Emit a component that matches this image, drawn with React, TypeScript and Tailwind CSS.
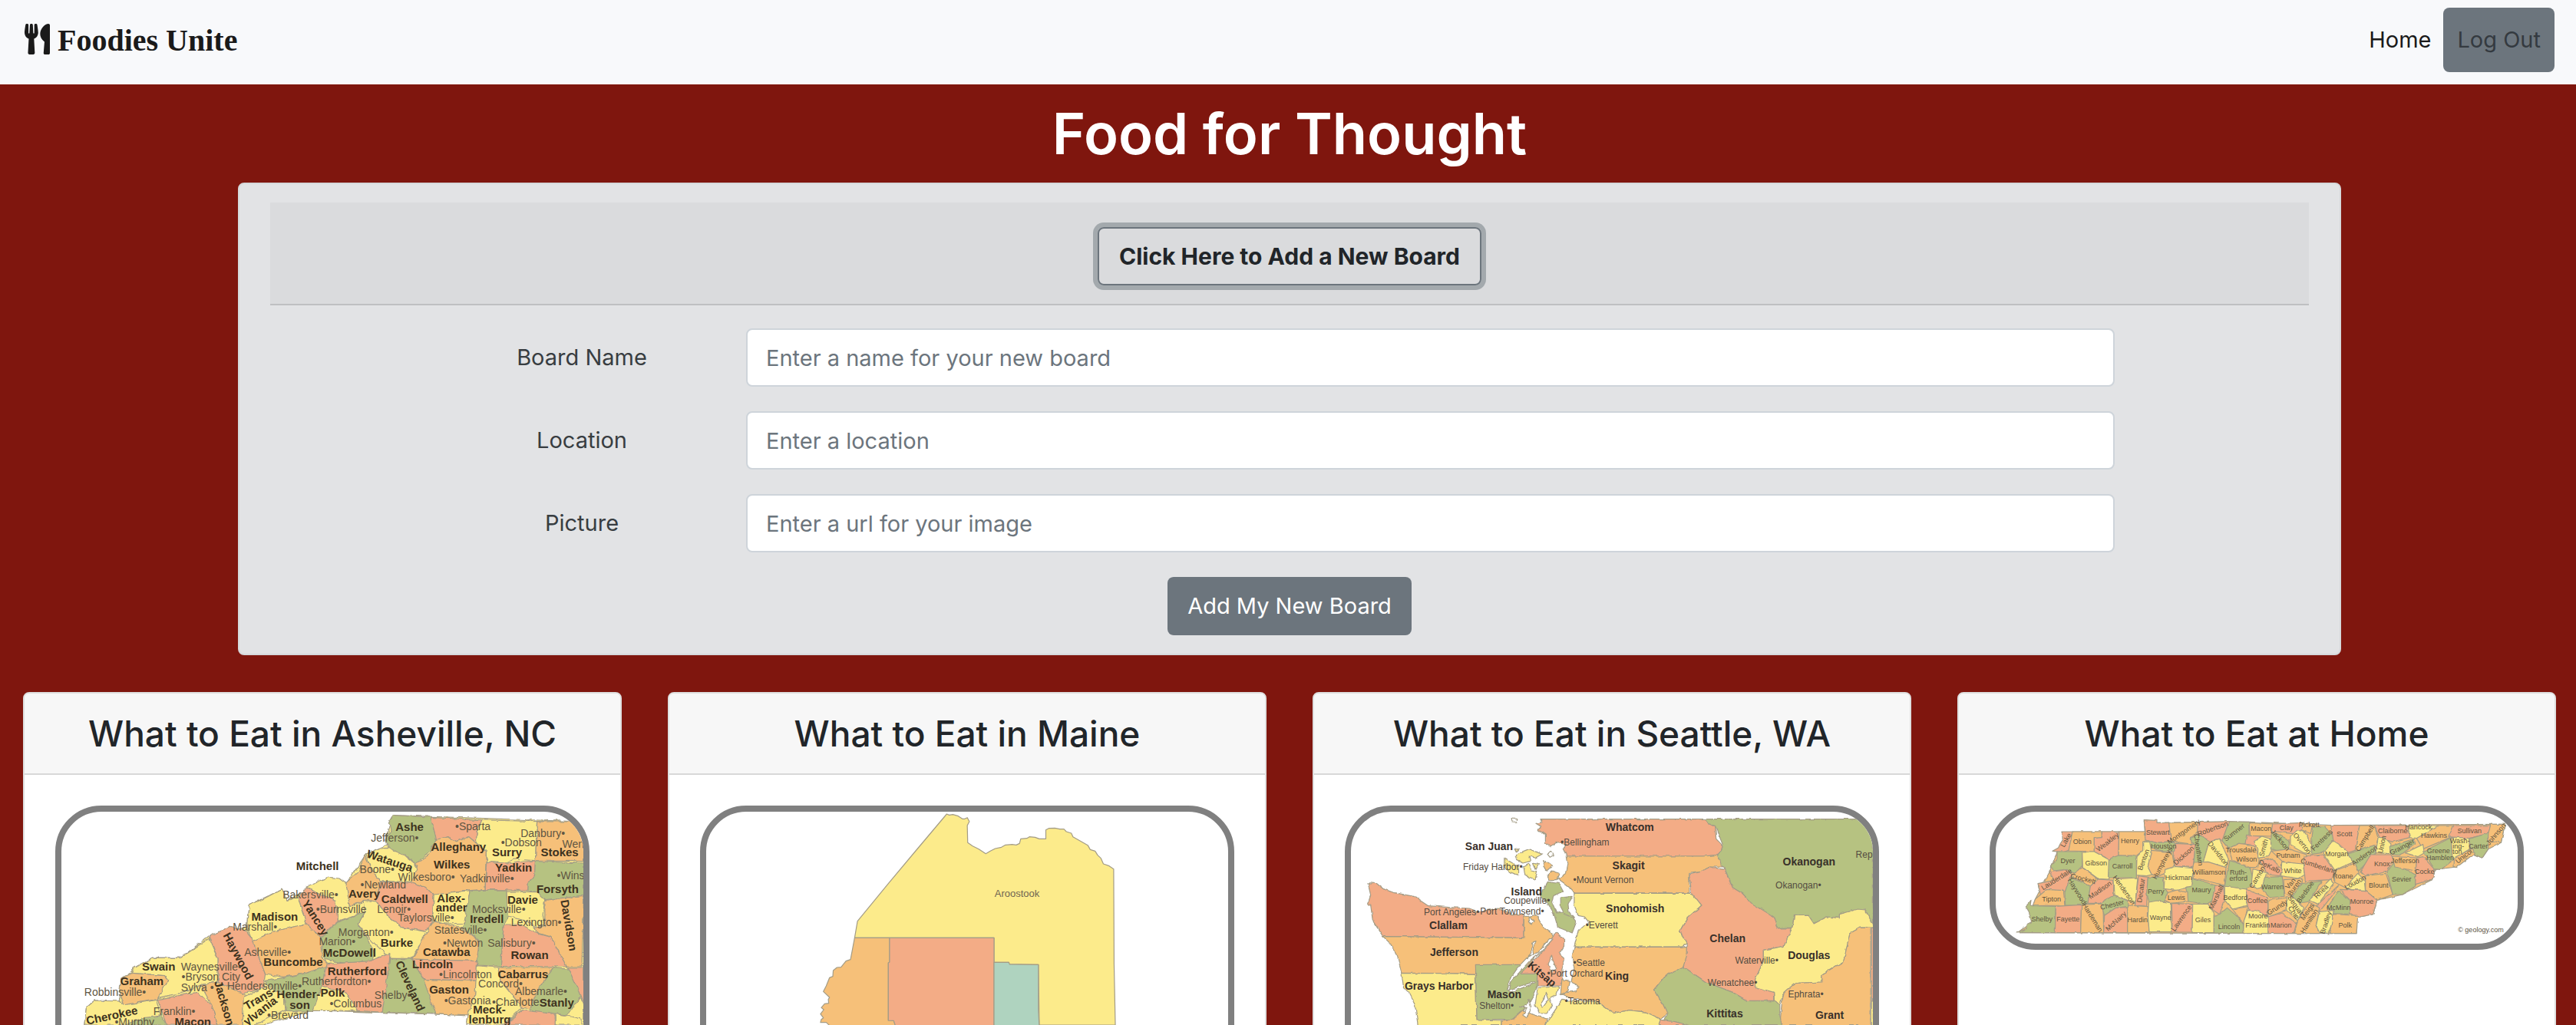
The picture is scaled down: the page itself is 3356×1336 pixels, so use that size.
import { FaUtensils } from "react-icons/fa";

const FILL: Record<string, string> = {
  y: "#fceb8b",
  o: "#f6c079",
  s: "#f3ac86",
  g: "#b6c281",
  t: "#afd3bf",
  w: "#ffffff",
};

/* text, centre x, centre y, rotation */
type Label = [string, number, number, number?];

type MapData = {
  name: string;
  height: number;
  scale: [number, number];
  offset: [number, number];
  base: string[];
  regions: string[];
  rough: number;
  names: Label[];
  towns: Label[];
  nameClass: string;
  townClass: string;
};

const asheville: MapData = {
  name: "Map of western North Carolina counties",
  height: 420,
  scale: [0.535714, 0.333333],
  offset: [-80, -178],
  rough: 5,
  base: [
    "y 955,548 1420,573 1420,1368 1135,1368 1140,1330 760,1310 640,1368 205,1368 210,1300 230,1272 290,1275 295,1185 370,1105 440,1105 508,1020 600,985 605,900 685,838 700,880 800,790 842,815 890,700 945,660 938,640",
  ],
  regions: [
    "g 955,548 1047,555 1062,640 1045,690 1025,715 1010,738 985,705 945,678 938,640 950,610 947,580",
    "s 1047,556 1172,566 1160,610 1158,655 1140,632 1110,650 1090,632 1062,650 1055,600",
    "y 1172,566 1306,572 1302,725 1250,720 1230,735 1183,730 1182,690 1158,655 1160,610",
    "o 1306,572 1420,573 1420,728 1302,726",
    "o 1062,645 1090,632 1110,650 1140,632 1182,690 1180,838 1145,842 1055,860 1035,830 1000,810 1015,745 1010,738 1045,700",
    "s 1183,730 1230,735 1302,726 1300,785 1285,810 1284,842 1180,838",
    "g 1302,728 1420,735 1420,862 1325,878 1305,848 1284,842 1285,810 1300,785",
    "y 890,700 920,678 945,676 985,705 1010,738 1015,760 1000,808 925,806 903,760",
    "o 887,705 903,760 925,806 922,850 915,885 890,880 850,905 846,870 840,815 870,770",
    "y 745,825 800,790 825,795 842,815 850,905 890,882 888,925 822,962 820,900 790,870 770,850",
    "s 725,870 745,828 770,850 815,880 822,962 780,1025 745,972",
    "s 925,808 1000,810 1035,830 1055,860 1050,985 1030,1000 975,985 945,945 915,885",
    "y 1055,858 1143,845 1130,970 1080,972 1052,960",
    "g 1143,842 1232,840 1235,945 1225,975 1218,1138 1160,1134 1165,1040 1125,985 1130,960",
    "y 1232,846 1305,848 1325,878 1320,935 1325,980 1300,985 1280,960 1235,945",
    "o 1325,880 1420,862 1415,1140 1378,1140 1340,1025 1310,1010 1300,985 1325,980",
    "s 1225,975 1265,975 1310,1012 1340,1025 1378,1140 1218,1138",
    "y 885,880 915,885 945,945 975,985 1040,1005 1000,1108 948,1108 905,1040 870,975 888,925",
    "o 1040,1002 1052,965 1120,985 1165,1040 1160,1118 1002,1110",
    "g 822,965 888,925 870,975 895,1030 910,1085 905,1120 850,1130 790,1112 780,1030",
    "y 605,900 640,875 685,838 700,880 725,870 745,972 660,1005 615,1040 600,985",
    "o 615,1040 660,1005 745,972 780,1028 785,1110 800,1135 745,1165 690,1180 645,1170",
    "s 508,1020 560,985 600,1000 615,1040 645,1170 640,1225 590,1245 530,1200 530,1110",
    "y 325,1145 370,1105 440,1105 508,1030 530,1110 530,1200 490,1210 450,1240 383,1262 408,1190 400,1175 320,1165",
    "o 295,1185 320,1165 400,1175 408,1190 383,1266 300,1290 290,1240",
    "y 210,1300 230,1272 290,1275 300,1290 380,1270 390,1330 330,1368 205,1368",
    "g 300,1368 350,1340 392,1332 405,1368",
    "s 383,1268 480,1240 515,1290 530,1368 405,1368",
    "o 488,1212 530,1200 595,1250 590,1368 530,1368 515,1290",
    "y 592,1258 650,1215 690,1250 695,1310 640,1350 590,1400",
    "g 645,1195 700,1180 745,1165 790,1140 785,1220 762,1315 695,1312 690,1250 650,1215",
    "y 782,1215 840,1240 870,1312 762,1312",
    "s 795,1130 900,1118 948,1088 945,1200 930,1318 870,1312 840,1240 782,1215",
    "g 948,1108 1002,1110 1030,1190 1058,1240 1058,1325 930,1318",
    "s 1002,1110 1160,1118 1160,1195 1030,1190",
    "o 1030,1190 1160,1195 1155,1250 1138,1332 1058,1325",
    "y 1160,1136 1210,1143 1220,1200 1270,1300 1225,1368 1135,1368 1140,1320 1155,1250",
    "o 1210,1143 1345,1143 1310,1225 1310,1310 1270,1300 1220,1200",
    "g 1345,1145 1390,1150 1415,1250 1380,1330 1340,1320 1300,1325 1290,1300 1310,1225",
    "s 1380,1143 1420,1143 1420,1290 1408,1240",
    "s 1270,1310 1350,1325 1350,1368 1225,1368",
    "y 1352,1325 1380,1332 1415,1345 1415,1368 1352,1368",
  ],
  names: [
    ["Ashe", 996, 592], ["Alleghany", 1115, 670], ["Surry", 1233, 693], ["Stokes", 1361, 693],
    ["Watauga", 948, 725, 18], ["Wilkes", 1099, 740], ["Yadkin", 1249, 751], ["Forsyth", 1356, 835],
    ["Mitchell", 772, 747], ["Avery", 886, 854], ["Caldwell", 984, 875], ["Alex-", 1097, 871],
    ["ander", 1098, 907], ["Davie", 1271, 877], ["Iredell", 1184, 953], ["Davidson", 1384, 978, 80],
    ["Madison", 668, 944], ["Yancey", 768, 948, 58], ["Burke", 965, 1047], ["McDowell", 850, 1085],
    ["Catawba", 1086, 1083], ["Rowan", 1288, 1095], ["Buncombe", 713, 1121], ["Haywood", 580, 1098, 62],
    ["Lincoln", 1052, 1131], ["Cleveland", 998, 1215, 65], ["Rutherford", 869, 1158], ["Cabarrus", 1272, 1168],
    ["Swain", 386, 1140], ["Graham", 345, 1195], ["Jackson", 546, 1282, 74], ["Trans-", 632, 1262, -30],
    ["ylvania", 632, 1312, -38], ["Hender-", 726, 1248], ["son", 729, 1290], ["Polk", 809, 1241],
    ["Gaston", 1092, 1228], ["Meck-", 1190, 1308], ["lenburg", 1191, 1347], ["Stanly", 1354, 1279],
    ["Cherokee", 272, 1330, -12], ["Macon", 469, 1354],
  ],
  towns: [
    ["Jefferson•", 960, 636], ["•Sparta", 1150, 590], ["Danbury•", 1320, 617], ["•Dobson", 1268, 654],
    ["Wen", 1394, 661], ["Boone•", 917, 760], ["Wilkesboro•", 1037, 788], ["Yadkinville•", 1184, 795],
    ["•Wins", 1388, 782], ["•Newland", 932, 820], ["Bakersville•", 755, 857], ["•Burnsville", 830, 914],
    ["Lenoir•", 958, 915], ["Taylorsville•", 1036, 948], ["Mocksville•", 1213, 915], ["Lexington•", 1304, 965],
    ["Marshall•", 620, 985], ["Morganton•", 890, 1004], ["Statesville•", 1120, 996], ["Marion•", 820, 1041],
    ["•Newton", 1126, 1047], ["Salisbury•", 1244, 1047], ["Asheville•", 651, 1082], ["Waynesville•", 514, 1140],
    ["•Bryson City", 513, 1180], ["•Lincolnton", 1132, 1170], ["Rutherfordton•", 818, 1198], ["Sylva •", 480, 1220],
    ["Hendersonville•", 643, 1214], ["Concord•", 1217, 1205], ["Albemarle•", 1316, 1237], ["Robbinsville•", 280, 1239],
    ["Shelby•", 955, 1252], ["•Gastonia", 1137, 1271], ["•Charlotte", 1254, 1277], ["•Columbus", 865, 1283],
    ["Franklin•", 424, 1315], ["•Brevard", 700, 1328], ["•Murphy", 327, 1356],
  ],
  nameClass: "text-[15px] font-bold fill-[#3d3220]",
  townClass: "text-[14px] fill-[#5f5643]",
};

const maine: MapData = {
  name: "Map of northern Maine counties",
  height: 420,
  scale: [0.535714, 0.333333],
  offset: [-60, -178],
  rough: 1,
  base: [],
  regions: [
    "y 697,543 703,547 712,545 725,551 735,562 741,562 747,557 752,572 747,588 748,655 760,668 775,680 792,698 803,688 815,678 830,673 840,664 856,662 866,664 874,658 877,640 892,638 898,632 912,634 922,640 938,640 938,605 945,599 960,598 972,602 982,602 988,612 1000,618 1004,632 1040,665 1046,682 1058,688 1064,704 1072,716 1078,738 1092,746 1103,758 1104,1130 1107,1368 922,1368 920,1132 848,1130 848,1123 812,1123 812,1027 473,1027 480,962 555,815 620,690",
    "o 473,1027 558,1027 558,1122 555,1125 555,1350 568,1351 572,1370 412,1370 404,1358 390,1358 392,1346 397,1340 390,1325 398,1308 392,1300 400,1285 410,1283 409,1268 412,1260 397,1237 404,1215 412,1183 420,1178 421,1155 430,1143 440,1142 446,1130 452,1118 463,1112 468,1070",
    "s 558,1027 812,1027 812,1370 572,1370 568,1351 555,1350 555,1125 558,1122",
    "t 812,1123 848,1123 850,1131 920,1132 920,1310 922,1370 812,1370",
  ],
  names: [],
  towns: [["Aroostook", 868, 853]],
  nameClass: "text-[15px] font-bold fill-[#3d3220]",
  townClass: "text-[13px] fill-[#6f6552]",
};

const seattle: MapData = {
  name: "Map of western Washington counties",
  height: 420,
  scale: [0.535714, 0.333333],
  offset: [-60, -178],
  rough: 4,
  base: [],
  regions: [
    "s 575,563 975,563 980,580 998,590 1000,640 1018,670 1005,703 970,708 637,708 628,680 636,662 612,655 598,668 585,655 585,625 568,605 574,592 562,580 578,575",
    "g 975,563 1382,563 1382,975 1362,915 1335,922 1300,935 1300,950 1270,945 1238,972 1225,940 1190,940 1185,988 1148,988 1140,950 1085,895 1065,855 1040,830 1022,760 1000,720 1018,670 998,590 980,580",
    "o 637,708 970,708 1003,703 1015,750 985,750 960,770 935,775 935,851 655,852 640,825 615,795 635,780 640,740",
    "y 655,853 945,853 965,900 930,950 912,1000 930,1050 915,1062 655,1062 665,1000 690,965 680,945 665,940 655,900",
    "s 935,780 960,770 985,750 1020,760 1040,830 1065,855 1085,890 1140,945 1148,990 1188,990 1165,1060 1115,1075 1115,1120 1095,1190 1100,1222 1140,1240 1140,1273 1075,1273 1040,1240 975,1200 920,1140 930,1060 930,1050 912,1000 930,950 965,900 940,850",
    "y 1185,988 1190,940 1225,940 1238,972 1270,945 1300,950 1300,935 1345,915 1362,918 1382,975 1382,987 1350,987 1325,1010 1310,1120 1258,1170 1258,1200 1190,1205 1165,1240 1155,1288 1142,1285 1140,1240 1095,1220 1095,1190 1115,1120 1115,1075 1165,1060",
    "o 1350,988 1376,988 1376,1370 1155,1370 1160,1280 1165,1240 1190,1205 1258,1200 1258,1170 1310,1120 1325,1010",
    "s 1378,988 1384,988 1384,1275 1378,1275",
    "y 1378,1275 1384,1275 1384,1370 1378,1370",
    "g 920,1140 975,1200 1040,1240 1075,1273 1142,1275 1155,1290 1155,1330 1160,1370 862,1370 882,1330 870,1285 850,1230 880,1170",
    "o 655,1063 915,1063 930,1060 930,1090 920,1140 880,1170 850,1230 870,1285 882,1325 865,1345 830,1318 790,1310 750,1322 710,1275 650,1265 620,1245 660,1235 665,1220 648,1195 655,1150 650,1100",
    "y 640,1275 710,1275 750,1322 790,1310 830,1318 865,1345 860,1370 585,1370 600,1330 625,1270",
    "s 865,1348 900,1355 935,1370 860,1370",
    "s 153,812 175,815 190,835 215,850 265,865 300,902 350,908 400,912 420,925 470,912 500,935 532,935 532,1027 385,1025 190,1022 165,960 160,900 152,900 160,860",
    "o 190,1022 385,1025 532,1027 533,945 562,938 580,985 598,1005 605,1025 590,1050 560,1100 525,1165 415,1168 325,1166 235,1165 225,1100 205,1045",
    "g 415,1132 540,1132 565,1165 564,1215 545,1290 505,1345 418,1347",
    "y 235,1165 325,1166 415,1168 418,1347 478,1350 478,1370 275,1370 268,1290 252,1240 240,1220",
    "o 478,1350 505,1345 530,1310 560,1330 590,1345 585,1370 478,1370",
    "s 612,1003 630,1030 630,1060 618,1090 632,1110 625,1150 628,1215 565,1215 565,1165 525,1165 560,1110 590,1060 600,1030",
    "o 625,1190 645,1195 640,1235 622,1245",
    "y 566,1222 618,1218 612,1250 595,1265 602,1290 590,1320 570,1320 560,1290",
    "g 590,808 618,815 628,845 605,862 600,885 612,930 640,925 660,965 650,1008 615,985 605,930 590,890 572,862 582,830",
    "g 622,870 650,865 640,895 642,925 655,950 632,935 622,905",
    "y 512,710 522,695 545,680 577,700 560,715 545,708 548,728 530,735 515,725",
    "y 485,715 505,735 520,750 520,782 498,770 485,750",
    "y 532,750 545,738 552,765 565,770 560,798 545,790 535,780",
    "y 555,735 568,740 562,760",
    "y 510,682 520,680 516,692",
    "o 582,725 594,735 602,745 588,765 580,750",
    "o 600,765 618,775 612,800 595,800 592,780",
    "w 502,561 517,563 515,574 504,573",
    "w 590,700 600,690 605,705 596,712",
    "w 562,1040 555,1065 558,1090 548,1112 540,1110 552,1085 552,1045",
    "w 603,1032 575,1080 548,1115 520,1165 500,1200 495,1232 490,1230 498,1190 515,1150 545,1100 565,1085 595,1030",
    "w 495,1232 525,1215 560,1198 560,1203 525,1225 500,1240",
    "w 600,1095 604,1120 612,1150 598,1160 592,1130",
    "w 545,1270 550,1300 540,1340 530,1330 540,1300 520,1300 540,1290",
    "w 585,1240 592,1270 578,1300 572,1290 582,1265",
    "w 545,945 558,960 552,975 546,965",
  ],
  names: [
    ["Whatcom", 790, 593], ["San Juan", 448, 668], ["Skagit", 787, 743], ["Okanogan", 1226, 730],
    ["Island", 539, 847], ["Snohomish", 803, 912], ["Clallam", 349, 979], ["Chelan", 1028, 1029],
    ["Jefferson", 363, 1083], ["Douglas", 1226, 1094], ["Kitsap", 577, 1168, 40], ["King", 759, 1176],
    ["Grays Harbor", 326, 1216], ["Mason", 485, 1248], ["Kittitas", 1021, 1323], ["Grant", 1276, 1330],
  ],
  towns: [
    ["•Bellingham", 681, 654], ["Rep", 1360, 703], ["Friday Harbor•", 457, 749], ["•Mount Vernon", 726, 800],
    ["Okanogan•", 1200, 822], ["Coupeville•", 540, 882], ["Port Angeles•", 357, 928], ["Port Townsend•", 504, 925],
    ["•Everett", 722, 979], ["Waterville•", 1099, 1115], ["•Seattle", 691, 1126], ["•Port Orchard", 657, 1168],
    ["Wenatchee•", 1040, 1204], ["Ephrata•", 1218, 1248], ["•Tacoma", 675, 1276], ["Shelton•", 466, 1293],
  ],
  nameClass: "text-[14px] font-bold fill-[#38302a]",
  townClass: "text-[12px] fill-[#544c42]",
};

const home: MapData = {
  name: "Map of Tennessee counties",
  height: 172,
  scale: [0.333333, 0.333333],
  offset: [-20, -18],
  rough: 3,
  base: [
    "o 360,132 643,132 640,86 690,97 1050,94 1370,107 2050,103 2035,175 1985,200 1960,237 1925,220 1860,270 1780,280 1765,320 1650,378 1550,400 1535,455 1470,468 1470,530 145,527 200,485 205,422 215,395 270,290 300,210 345,205",
  ],
  regions: [
    "s 318,132 360,132 345,205 325,212 282,208 305,195 312,180 325,160",
    "o 360,132 475,132 475,155 445,158 445,210 345,207",
    "s 475,132 542,132 540,232 510,243 445,210 445,158 475,155",
    "o 542,132 643,132 645,170 635,172 635,205 612,225 540,225",
    "s 640,86 690,88 690,97 737,97 745,170 690,176 648,165",
    "o 737,97 850,95 850,130 820,160 835,182 745,170",
    "s 850,95 972,92 945,168 935,160 895,168 848,142",
    "g 972,92 1050,94 1050,150 1035,180 1010,178 970,198 945,168",
    "g 648,165 690,176 745,170 762,178 758,210 690,204 662,190",
    "g 820,160 850,142 895,168 868,262 835,252 838,185",
    "s 762,178 840,182 832,272 760,267 755,230",
    "y 895,168 935,160 945,185 970,240 960,272 890,252 868,262",
    "y 635,172 662,172 668,205 655,270 670,300 650,305 610,302 612,230 635,205",
    "o 668,205 750,212 758,267 722,295 690,308 670,300 655,270",
    "g 300,210 398,210 398,265 370,295 330,280 285,285 278,265 300,240",
    "y 398,210 445,210 505,243 500,318 460,316 400,272",
    "g 512,235 540,225 610,228 610,312 500,312 502,243",
    "o 398,272 460,318 430,345 362,310 370,295",
    "s 270,290 340,280 358,300 332,365 235,378 225,335 275,325 285,315",
    "g 350,310 430,345 420,412 395,420 332,420 330,370",
    "s 430,345 460,318 522,322 520,385 480,412 420,412",
    "y 522,318 615,312 605,415 575,400 525,380",
    "s 618,305 655,310 650,420 605,422",
    "g 655,310 715,310 718,350 733,370 720,403 660,410 650,370",
    "y 722,280 760,268 832,275 825,345 770,362 718,355",
    "o 835,252 890,250 960,272 955,342 835,312 830,275",
    "g 828,312 918,342 905,405 885,415 812,405 803,350 825,345",
    "o 260,358 325,362 330,420 205,422 215,395",
    "g 205,422 295,424 292,527 145,527 180,510 180,495 200,485 190,445 178,425 198,400 195,420",
    "s 295,424 395,418 392,527 292,527",
    "o 395,418 480,414 482,527 392,527",
    "g 470,410 522,380 575,402 575,425 530,430 485,460",
    "s 485,460 530,430 575,427 575,527 482,527",
    "o 575,420 655,425 660,527 575,527",
    "y 658,408 690,402 745,410 748,524 660,524 655,460",
    "o 733,370 770,360 810,370 812,405 745,412 720,400",
    "s 748,412 830,415 828,525 742,525 750,500",
    "y 830,415 890,415 913,450 913,527 828,527",
    "s 918,342 950,342 955,400 935,455 895,430 905,405",
    "y 955,345 1040,355 1045,420 985,435 955,400",
    "g 913,460 935,455 965,430 1000,460 1028,495 1028,528 913,528",
    "g 975,245 1055,272 1063,310 1060,345 1040,357 955,345 965,290",
    "s 1035,180 1040,145 1095,150 1075,190",
    "o 970,198 1010,178 1070,185 1090,235 1085,272 1055,272 985,245",
    "s 1040,357 1120,390 1125,425 1120,465 1050,437 1040,410",
    "o 985,435 1045,425 1030,495 1005,460",
    "y 1045,440 1080,440 1125,465 1125,530 1028,530 1030,480",
    "o 1050,97 1142,102 1138,150 1055,148",
    "y 1070,170 1100,150 1135,160 1138,205 1125,230 1085,235 1085,200",
    "s 1142,102 1258,97 1255,122 1225,140 1138,130",
    "o 1258,97 1315,102 1295,120 1290,140 1255,125",
    "g 1138,130 1208,165 1205,200 1180,210 1135,200",
    "y 1212,150 1240,125 1265,130 1290,170 1295,220 1265,215 1212,185",
    "g 1300,118 1345,112 1385,155 1360,200 1335,215 1295,220 1295,165",
    "o 1138,208 1205,200 1275,222 1265,262 1180,248",
    "y 1178,250 1260,258 1268,300 1245,315 1175,305",
    "s 1090,245 1140,238 1180,280 1170,305 1125,300",
    "y 1065,278 1118,292 1105,350 1080,355 1060,335",
    "g 1112,310 1180,308 1188,385 1130,390 1100,355",
    "s 1370,107 1482,107 1465,205 1435,215 1380,170",
    "y 1380,168 1400,180 1435,212 1460,250 1385,282 1340,215",
    "s 1265,228 1340,222 1385,290 1370,320 1270,325 1263,260",
    "o 1482,108 1540,108 1555,160 1545,190 1480,212 1465,205",
    "s 1540,108 1670,108 1678,155 1610,172 1560,155",
    "y 1555,155 1580,155 1605,180 1600,218 1545,215",
    "g 1440,218 1540,185 1545,215 1480,285 1455,250",
    "o 1385,285 1465,255 1480,295 1425,350 1385,330",
    "s 1525,222 1605,222 1615,240 1590,285 1505,305 1485,290",
    "y 1425,350 1475,295 1500,320 1505,362 1450,358",
    "o 1505,305 1585,295 1612,378 1550,400 1505,362",
    "g 1590,290 1615,255 1700,300 1700,345 1650,378 1612,378",
    "y 1670,108 1790,108 1740,140 1705,158 1678,155",
    "o 1705,158 1790,108 1850,108 1835,155 1730,200",
    "g 1600,190 1695,160 1700,180 1640,225 1602,220",
    "y 1660,215 1730,182 1735,215 1710,230",
    "o 1610,228 1710,235 1700,285 1620,270",
    "s 1705,235 1730,230 1780,285 1765,320 1700,338",
    "g 1730,210 1840,155 1845,245 1800,280 1775,278",
    "y 1840,155 1910,152 1912,200 1845,240",
    "s 1850,108 1995,108 1985,140 1910,158 1830,152",
    "g 1910,160 1985,138 1985,200 1960,237 1920,220",
    "o 1850,235 1925,198 1930,218 1860,272 1848,268",
    "o 1995,103 2050,103 2040,150 2035,175 1985,165 1985,140",
    "o 1185,320 1260,315 1255,345 1220,385 1190,375",
    "o 1125,400 1200,390 1195,440 1125,465",
    "g 1255,335 1335,325 1285,405 1240,412 1220,385",
    "y 1195,390 1225,390 1265,430 1240,480 1200,440",
    "s 1125,465 1180,450 1235,490 1225,530 1125,530",
    "y 1285,400 1370,315 1382,335 1320,415",
    "s 1315,420 1400,342 1385,370 1325,445",
    "o 1285,408 1325,430 1312,500 1325,530 1228,530 1240,480",
    "g 1355,430 1400,365 1445,400 1450,455 1380,452",
    "s 1405,358 1505,362 1550,400 1535,455 1470,468 1445,450 1445,400",
    "y 1325,445 1380,440 1375,490 1360,530 1325,525 1312,500",
    "o 1380,455 1475,460 1470,530 1365,530",
  ],
  names: [],
  towns: [
    ["Lake", 335, 165, -60], ["Obion", 398, 172], ["Weakley", 497, 173, -38], ["Henry", 585, 168], ["Stewart", 694, 135],
    ["Montgomery", 795, 132, -35], ["Robertson", 908, 120, -20], ["Sumner", 992, 135, -38], ["Houston", 716, 188],
    ["Cheatham", 852, 203, 82], ["Dickson", 795, 225, -42], ["Davidson", 930, 218, 52], ["Benton", 638, 242, -70],
    ["Humphreys", 712, 255, -62], ["Dyer", 342, 245], ["Gibson", 452, 255], ["Carroll", 555, 268], ["Crockett", 402, 316, 14],
    ["Lauderdale", 298, 318, -32], ["Haywood", 378, 365, 58], ["Madison", 468, 360, -35], ["Henderson", 562, 360, 55],
    ["Decatur", 628, 362, -82], ["Perry", 686, 366], ["Hickman", 775, 312], ["Williamson", 893, 290], ["Maury", 864, 361],
    ["Tipton", 278, 396], ["Shelby", 241, 475], ["Fayette", 343, 475], ["Hardeman", 438, 468, 58], ["Chester", 515, 418, -14],
    ["McNairy", 530, 482, -42], ["Hardin", 614, 476], ["Wayne", 704, 468], ["Lewis", 766, 389], ["Lawrence", 786, 470, -55],
    ["Giles", 870, 478], ["Marshall", 922, 388, -65], ["Bedford", 997, 390], ["Lincoln", 972, 503], ["Ruth-", 1008, 291],
    ["erford", 1009, 315], ["Trousdale", 1018, 203], ["Wilson", 1040, 240], ["Coffee", 1083, 401], ["Moore", 1085, 463],
    ["Franklin", 1084, 498], ["Macon", 1097, 119], ["Smith", 1107, 195, -75], ["Clay", 1196, 116], ["Pickett", 1285, 106],
    ["Jackson", 1172, 165, 50], ["Overton", 1258, 178, 52], ["Fentress", 1335, 165, -45], ["Putnam", 1203, 225],
    ["White", 1221, 285], ["DeKalb", 1130, 268, 25], ["Cannon", 1082, 310, -60], ["Warren", 1142, 348], ["Scott", 1423, 142],
    ["Morgan", 1393, 219], ["Cumberland", 1322, 267, 18], ["Campbell", 1503, 158, -58], ["Claiborne", 1612, 130],
    ["Union", 1570, 182, -78], ["Anderson", 1502, 225, -35], ["Roane", 1417, 305], ["Knox", 1570, 258], ["Loudon", 1465, 330, -28],
    ["Blount", 1556, 343], ["Sevier", 1646, 318], ["Hancock", 1712, 114], ["Hawkins", 1773, 147], ["Grainger", 1648, 192, -28],
    ["Jefferson", 1660, 246], ["Cocke", 1736, 288], ["Greene", 1790, 206], ["Hamblen", 1797, 235], ["Wash-", 1874, 169],
    ["ing-", 1868, 190], ["ton", 1864, 211], ["Sullivan", 1912, 129], ["Carter", 1946, 188], ["Unicoi", 1890, 228, -38],
    ["Johnson", 2015, 142, -50], ["Van", 1212, 335, -50], ["Buren", 1228, 350, -55], ["Grundy", 1160, 428, -32],
    ["Bledsoe", 1270, 368, -55], ["Sequat", 1232, 420, 55], ["Chie", 1225, 448, 55], ["Marion", 1175, 499], ["Rhea", 1332, 366, -45],
    ["Meigs", 1278, 445, -55], ["Hamilton", 1285, 482, -58], ["McMinn", 1400, 430], ["Monroe", 1491, 405],
    ["Bradley", 1350, 488, -72], ["Polk", 1426, 499], ["© geology.com", 1956, 517],
  ],
  nameClass: "text-[9px] fill-[#5e5545]",
  townClass: "text-[9px] fill-[#5c5342]",
};

const boards = [
  { title: "What to Eat in Asheville, NC", map: asheville },
  { title: "What to Eat in Maine", map: maine },
  { title: "What to Eat in Seattle, WA", map: seattle },
  { title: "What to Eat at Home", map: home },
];

const fields = [
  { id: "board-name", label: "Board Name", placeholder: "Enter a name for your new board" },
  { id: "location", label: "Location", placeholder: "Enter a location" },
  { id: "picture", label: "Picture", placeholder: "Enter a url for your image" },
];

function MapLabels({ map, labels, className }: { map: MapData; labels: Label[]; className: string }) {
  return (
    <g className={className} textAnchor="middle" dominantBaseline="central">
      {labels.map(([text, x, y, angle = 0]) => {
        const px = x * map.scale[0] + map.offset[0];
        const py = y * map.scale[1] + map.offset[1];
        return (
          <text key={text + x} x={px} y={py} transform={`rotate(${angle} ${px} ${py})`}>
            {text}
          </text>
        );
      })}
    </g>
  );
}

function CountyMap({ map, id }: { map: MapData; id: string }) {
  const { scale, offset } = map;
  return (
    <svg
      viewBox={`0 0 680 ${map.height}`}
      role="img"
      aria-label={map.name}
      className="block w-full font-['Liberation_Sans',sans-serif]"
    >
      <filter id={id} x="-5%" y="-5%" width="110%" height="110%" colorInterpolationFilters="sRGB">
        <feTurbulence type="fractalNoise" baseFrequency="0.12" numOctaves="2" seed="4" />
        <feDisplacementMap in="SourceGraphic" scale={map.rough} xChannelSelector="R" yChannelSelector="G" />
      </filter>
      <g filter={`url(#${id})`}>
        <g
          transform={`translate(${offset[0]} ${offset[1]}) scale(${scale[0]} ${scale[1]})`}
          stroke="#a39c86"
          strokeWidth={1.2}
          strokeLinejoin="round"
        >
          {[...map.base, ...map.regions].map((region) => (
            <polygon
              key={region}
              points={region.slice(2)}
              fill={FILL[region[0]]}
              vectorEffect="non-scaling-stroke"
            />
          ))}
        </g>
      </g>
      <MapLabels map={map} labels={map.towns} className={map.townClass} />
      <MapLabels map={map} labels={map.names} className={map.nameClass} />
    </svg>
  );
}

export default function App() {
  return (
    <div className="h-screen overflow-hidden bg-[#7f160e] font-['Inter',sans-serif] text-[29px] leading-[48px] text-[#212529]">
      <nav className="flex h-[110px] items-center justify-between bg-[#f8f9fb] pr-7 pl-8">
        <a href="#" className="flex items-center gap-2.5 pb-1 text-[#1a1a1a]">
          <FaUtensils className="-mt-1 h-10 w-[33px]" preserveAspectRatio="none" />
          <span className="font-['Liberation_Serif',serif] text-[40px] font-bold">Foodies Unite</span>
        </a>
        <div className="flex items-center gap-4 pb-1.5">
          <a href="#" className="text-[#1a1a1a]">Home</a>
          <button className="h-21 rounded-lg bg-[#6c757d] px-4.5 text-[#343a40]">Log Out</button>
        </div>
      </nav>

      <main className="-mr-1">
        <h1 className="pt-4 pb-4 text-center text-[74px] leading-[96px] font-semibold text-white">Food for Thought</h1>

        <section className="mx-[310px] rounded-lg border-2 border-[#d6d8db] bg-[#e2e3e5] px-10 py-6">
          <div className="flex justify-center border-b-2 border-[#bfc0c2] bg-[#dadbdd] pt-8 pb-6">
            <button className="h-19 rounded-lg border-2 border-[#6c757d] px-6.5 text-[30px] font-bold ring-6 ring-[#a3a9ad]">
              Click Here to Add a New Board
            </button>
          </div>
          <form className="mt-[30px] flex flex-col gap-8">
            {fields.map((field) => (
              <div key={field.id} className="grid grid-cols-[428fr_1783fr] items-center pr-[253px] pl-48">
                <label htmlFor={field.id} className="text-center text-[#383d41]">
                  {field.label}
                </label>
                <input
                  id={field.id}
                  type="text"
                  placeholder={field.placeholder}
                  className="h-19 w-full rounded-lg border-2 border-[#ced4da] bg-white px-6 placeholder:text-[#6c757d]"
                />
              </div>
            ))}
            <button type="button" className="h-19 self-center rounded-lg bg-[#6c757d] px-6.5 text-white">
              Add My New Board
            </button>
          </form>
        </section>

        <div className="mt-12 grid grid-cols-4 gap-15 px-[30px]">
          {boards.map((board, index) => (
            <article key={board.title} className="rounded-lg border-2 border-[#dfdfdf] bg-white">
              <h2 className="rounded-t-md border-b-2 border-[#d8d8d8] bg-[#f7f7f7] py-6 text-center text-[46px] leading-[56px] font-medium">
                {board.title}
              </h2>
              <div className="p-10">
                <div className="overflow-hidden rounded-[60px] border-8 border-[#808080]">
                  <CountyMap map={board.map} id={`edge-${index}`} />
                </div>
              </div>
            </article>
          ))}
        </div>
      </main>
    </div>
  );
}
